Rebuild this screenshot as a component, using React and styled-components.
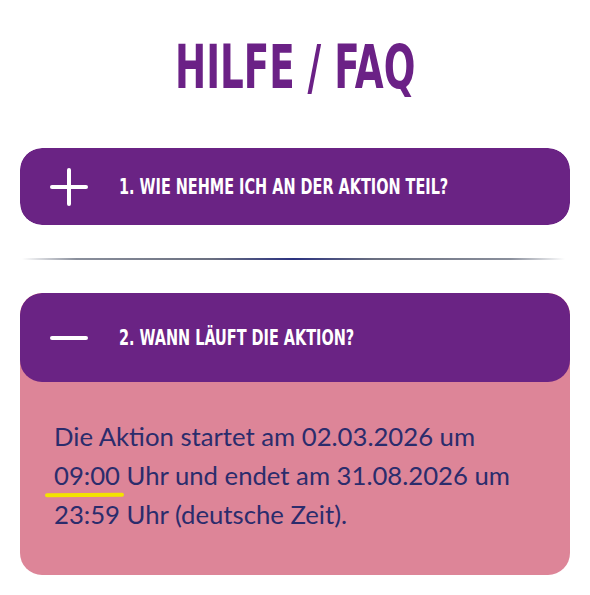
import React, {useState} from 'react'
import styled, {createGlobalStyle} from 'styled-components'

const GlobalStyle = createGlobalStyle`
    html, body {
        margin: 0;
        padding: 0;
        background: #ffffff;
    }
`

const Page = styled.div`
    width: 590px;
    box-sizing: border-box;
    padding: 0 20px;
    font-family: 'Lato', sans-serif;
`
const Title = styled.h1`
    margin: 0;
    height: 148px;
    padding-top: 31px;
    box-sizing: border-box;
    text-align: center;
    font-family: 'Liberation Sans Narrow', 'DejaVu Sans Condensed', sans-serif;
    font-weight: bold;
    font-size: 60px;
    line-height: 72px;
    color: #6b2186;
    span {
        display: inline-block;
        transform: scaleX(0.69);
    }
`
const Item = styled.div`
    border-radius: 22px;
    background: ${props => props.open ? '#dd8598' : 'transparent'};
    overflow: hidden;
`
const Header = styled.button`
    display: flex;
    align-items: center;
    width: 100%;
    height: ${props => props.open ? '89px' : '77px'};
    padding: 0 0 0 30px;
    border: none;
    border-radius: 22px;
    background: #6a2384;
    cursor: pointer;
    text-align: left;
`
const Icon = styled.span`
    position: relative;
    width: 38px;
    height: 38px;
    flex-shrink: 0;
    &::before, &::after {
        content: '';
        position: absolute;
        background: #ffffff;
        border-radius: 2px;
    }
    &::before {
        left: 0;
        right: 0;
        top: 17px;
        height: 4px;
    }
    &::after {
        display: ${props => props.open ? 'none' : 'block'};
        top: 0;
        bottom: 0;
        left: 17px;
        width: 4px;
    }
`
const Question = styled.span`
    margin-left: 31px;
    font-family: 'Liberation Sans Narrow', 'DejaVu Sans Condensed', sans-serif;
    font-weight: bold;
    font-size: 22px;
    color: #ffffff;
    display: inline-block;
    transform: scaleX(0.73);
    transform-origin: left center;
    white-space: nowrap;
`
const Answer = styled.p`
    margin: 0;
    padding: 35px 34px 41px 34px;
    font-size: 25.7px;
    line-height: 39px;
    color: #2b2c6c;
`
const Marked = styled.span`
    position: relative;
    &::after {
        content: '';
        position: absolute;
        left: -9px;
        right: -4px;
        bottom: -7px;
        height: 4px;
        border-radius: 3px;
        background: #f3e300;
        transform: rotate(-0.5deg);
    }
`
const Divider = styled.div`
    height: 2px;
    margin: 33px 5px 33px 2px;
    background: linear-gradient(90deg, rgba(120,130,150,0) 0%, #8a8f9c 10%, #6a6f80 35%, #2b3280 50%, #6a6f80 65%, #8a8f9c 90%, rgba(120,130,150,0) 100%);
`

const faqs = [
    {q: '1. WIE NEHME ICH AN DER AKTION TEIL?', a: null},
    {q: '2. WANN LÄUFT DIE AKTION?', a: (
        <>Die Aktion startet am 02.03.2026 um <Marked>09:00</Marked> Uhr und endet am 31.08.2026 um 23:59 Uhr (deutsche Zeit).</>
    )}
]

export default function App() {
    const [open, setOpen] = useState(1)

    return (
        <>
            <GlobalStyle />
            <Page>
                <Title><span>HILFE / FAQ</span></Title>
                {faqs.map((item, i) => (
                    <React.Fragment key={i}>
                        {i > 0 && <Divider />}
                        <Item open={open === i}>
                            <Header open={open === i} onClick={() => setOpen(open === i ? -1 : i)}>
                                <Icon open={open === i} />
                                <Question>{item.q}</Question>
                            </Header>
                            {open === i && item.a && <Answer>{item.a}</Answer>}
                        </Item>
                    </React.Fragment>
                ))}
            </Page>
        </>
    )
}
